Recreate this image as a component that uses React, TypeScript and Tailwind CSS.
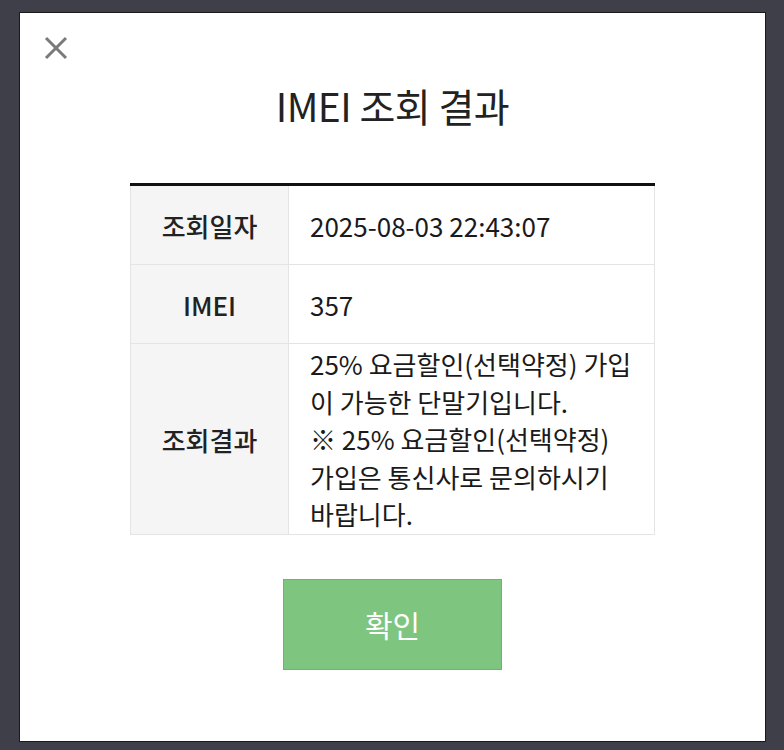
import React from "react";

const rows: { label: string; value: React.ReactNode; tall?: boolean }[] = [
  { label: "조회일자", value: "2025-08-03 22:43:07" },
  { label: "IMEI", value: "357" },
  {
    label: "조회결과",
    tall: true,
    value: (
      <>
        25% 요금할인(선택약정) 가입
        <br />이 가능한 단말기입니다.
        <br />※ 25% 요금할인(선택약정)
        <br />
        가입은 통신사로 문의하시기
        <br />
        바랍니다.
      </>
    ),
  },
];

const App: React.FC = () => {
  return (
    <div
      className="w-[784px] h-[750px] bg-[#3e3f48] pt-[12px] pl-[19px] overflow-hidden"
      style={{ fontFamily: '"Noto Sans CJK KR", "Noto Sans", sans-serif' }}
    >
      <div className="relative w-[747px] h-[730px] bg-white border border-[#1a1a1a] flex flex-col items-center">
        {/* Close */}
        <button className="absolute left-[24px] top-[23px] text-[#7a7a7a]">
          <svg width="24" height="24" viewBox="0 0 24 24" fill="none">
            <path d="M2 2L22 22M22 2L2 22" stroke="currentColor" strokeWidth="3" />
          </svg>
        </button>

        <h1 className="mt-[67px] text-[39px] leading-[50px] text-[#222] tracking-[-0.5px]">
          IMEI 조회 결과
        </h1>

        {/* Result table */}
        <div className="mt-[53px] w-[525px] border-t-[3px] border-[#111]">
          {rows.map((row) => (
            <div
              key={row.label}
              className="flex border-b border-x border-[#e4e4e4] text-[26px] text-[#1a1a1a]"
            >
              <div
                className={`w-[158px] shrink-0 bg-[#f5f5f5] border-r border-[#e4e4e4] flex items-center justify-center font-medium text-[#222] ${
                  row.tall ? "h-[190px]" : "h-[78px]"
                }`}
              >
                {row.label}
              </div>
              <div
                className={`flex-1 pl-[21px] flex items-center whitespace-nowrap ${
                  row.tall ? "leading-[37.5px]" : ""
                }`}
              >
                <div>{row.value}</div>
              </div>
            </div>
          ))}
        </div>

        <button className="mt-[44px] w-[219px] h-[91px] bg-[#7ec680] border border-[#6fb272] text-white text-[30px]">
          확인
        </button>
      </div>
    </div>
  );
};

export default App;
